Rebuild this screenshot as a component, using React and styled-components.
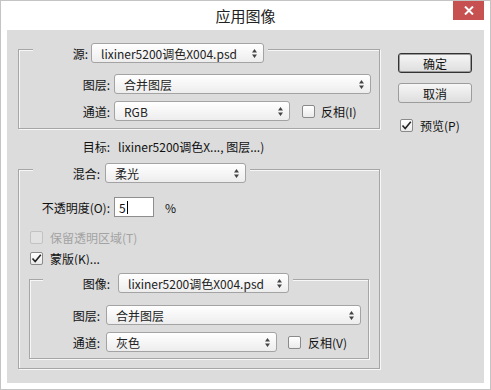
import React from 'react';
import styled, { createGlobalStyle } from 'styled-components';

const GlobalStyle = createGlobalStyle`
  html, body {
    margin: 0;
    padding: 0;
    background: #fff;
  }
  body {
    font-family: "Noto Sans CJK SC", "Noto Sans", sans-serif;
    font-size: 12px;
    color: #111;
  }
`;

const Window = styled.div`
  width: 491px;
  height: 390px;
  box-sizing: border-box;
  border: 1px solid #c4c4c4;
  background: #fff;
  display: flex;
  flex-direction: column;
`;

const TitleBar = styled.div`
  height: 29px;
  display: grid;
  grid-template-columns: 1fr auto 1fr;
  align-items: start;
`;

const Title = styled.div`
  grid-column: 2;
  font-size: 15px;
  line-height: 29px;
  color: #222;
`;

const CloseButton = styled.button`
  grid-column: 3;
  justify-self: end;
  margin: 0 6px 0 0;
  width: 31px;
  height: 19px;
  padding: 0;
  border: none;
  background: #c75050;
  display: flex;
  align-items: center;
  justify-content: center;
`;

const Body = styled.div`
  flex: 1;
  margin: 0 6px 6px;
  padding: 5px 0 0 11px;
  background: #dcdcdc;
  display: flex;
  gap: 18px;
`;

const LeftColumn = styled.div`
  width: 362px;
  display: flex;
  flex-direction: column;
`;

const RightColumn = styled.div`
  width: 74px;
  padding-top: 18px;
  display: flex;
  flex-direction: column;
  gap: 10px;
`;

const Group = styled.fieldset`
  margin: ${p => p.$margin || '0'};
  padding: ${p => p.$pt}px 0 ${p => p.$pb}px;
  border: 1px solid #a6a6a6;
  box-shadow: inset 1px 1px 0 #f7f7f7, 1px 1px 0 #f7f7f7;
  display: flex;
  flex-direction: column;
  min-width: 0;
`;

const Legend = styled.legend`
  margin-left: ${p => p.$ml}px;
  padding: 8px 4px 0;
  background: #dcdcdc;
  display: flex;
  align-items: center;
`;

const Row = styled.div`
  display: flex;
  align-items: center;
  height: ${p => p.$h || 20}px;
  margin-top: ${p => p.$mt || 0}px;
  padding-left: ${p => p.$pl || 0}px;
`;

const Label = styled.span`
  flex: none;
  width: ${p => p.$w}px;
  margin-right: ${p => p.$gap}px;
  text-align: right;
  white-space: nowrap;
`;

const Text = styled.span`
  white-space: nowrap;
  margin-left: ${p => p.$ml || 0}px;
  color: ${p => (p.$disabled ? '#a3a3a3' : 'inherit')};
`;

const SelectBox = styled.div`
  flex: none;
  box-sizing: border-box;
  width: ${p => p.$w}px;
  height: 20px;
  padding: 0 6px 0 9px;
  border: 1px solid #a3a3a3;
  border-radius: 3px;
  background: linear-gradient(#ffffff, #ededed);
  display: flex;
  align-items: center;
  justify-content: space-between;
  white-space: nowrap;
  color: #222;
`;

const TextInput = styled.div`
  flex: none;
  box-sizing: border-box;
  width: 40px;
  height: 20px;
  padding-left: 4px;
  border: 1px solid #8e8e8e;
  background: #fff;
  display: flex;
  align-items: center;
`;

const Caret = styled.span`
  display: inline-block;
  width: 1px;
  height: 13px;
  margin-left: 1px;
  background: #000;
`;

const Box = styled.span`
  flex: none;
  box-sizing: border-box;
  width: 13px;
  height: 13px;
  margin-left: ${p => p.$ml || 0}px;
  border: 1px solid ${p => (p.$disabled ? '#c2c2c2' : '#8a8a8a')};
  border-radius: 2px;
  background: ${p => (p.$disabled ? '#e2e2e2' : 'linear-gradient(#ffffff, #eaeaea)')};
  display: flex;
  align-items: center;
  justify-content: center;
`;

const Button = styled.button`
  box-sizing: border-box;
  width: 74px;
  height: 20px;
  padding: 0;
  font: inherit;
  font-size: 12px;
  color: #111;
  border: 1px solid ${p => (p.$primary ? '#333' : '#9c9c9c')};
  border-radius: 3px;
  box-shadow: ${p => (p.$primary ? 'inset 0 0 0 1px #9a9a9a' : 'none')};
  background: linear-gradient(#f6f6f6, #dedede);
  display: flex;
  align-items: center;
  justify-content: center;
`;

const Arrows = () => (
  <svg width="5" height="9" viewBox="0 0 5 9">
    <path d="M2.5 0 L5 3.5 L0 3.5 Z M2.5 9 L5 5.5 L0 5.5 Z" fill="#444" />
  </svg>
);

const Select = ({ w, children }) => (
  <SelectBox $w={w}>
    <span>{children}</span>
    <Arrows />
  </SelectBox>
);

const Checkbox = ({ checked, disabled, ml }) => (
  <Box $ml={ml} $disabled={disabled}>
    {checked && (
      <svg width="11" height="11" viewBox="0 0 11 11">
        <path d="M1.5 5.5 L4.2 8.5 L9.8 1.8" fill="none" stroke="#222" strokeWidth="1.6" />
      </svg>
    )}
  </Box>
);

export default function App() {
  return (
    <>
      <GlobalStyle />
      <Window>
        <TitleBar>
          <Title>应用图像</Title>
          <CloseButton aria-label="关闭">
            <svg width="10" height="9" viewBox="0 0 10 9">
              <path d="M1 0.5 L9 8.5 M9 0.5 L1 8.5" stroke="#fff" strokeWidth="2" />
            </svg>
          </CloseButton>
        </TitleBar>
        <Body>
          <LeftColumn>
            <Group $pt={11} $pb={7}>
              <Legend $ml={14}>
                <Label $w={51} $gap={3}>源:</Label>
                <Select w={173}>lixiner5200调色X004.psd</Select>
              </Legend>
              <Row>
                <Label $w={91} $gap={4}>图层:</Label>
                <Select w={257}>合并图层</Select>
              </Row>
              <Row $mt={7}>
                <Label $w={91} $gap={4}>通道:</Label>
                <Select w={176}>RGB</Select>
                <Checkbox ml={12} />
                <Text $ml={6}>反相(I)</Text>
              </Row>
            </Group>

            <Row $h={18} $mt={8}>
              <Label $w={92} $gap={8}>目标:</Label>
              <Text>lixiner5200调色X..., 图层...)</Text>
            </Row>

            <Group $pt={14} $pb={0}>
              <Legend $ml={14}>
                <Label $w={63} $gap={5}>混合:</Label>
                <Select w={141}>柔光</Select>
              </Legend>
              <Row>
                <Label $w={91} $gap={4}>不透明度(O):</Label>
                <TextInput>
                  5<Caret />
                </TextInput>
                <Text $ml={11}>%</Text>
              </Row>
              <Row $h={14} $mt={13} $pl={11}>
                <Checkbox disabled />
                <Text $ml={7} $disabled>保留透明区域(T)</Text>
              </Row>
              <Row $h={14} $mt={7} $pl={11}>
                <Checkbox checked />
                <Text $ml={7}>蒙版(K)...</Text>
              </Row>

              <Group $pt={12} $pb={6} $margin="0 10px 9px 10px">
                <Legend $ml={13}>
                  <Label $w={63} $gap={8}>图像:</Label>
                  <Select w={171}>lixiner5200调色X004.psd</Select>
                </Legend>
                <Row>
                  <Label $w={70} $gap={6}>图层:</Label>
                  <Select w={255}>合并图层</Select>
                </Row>
                <Row $mt={7}>
                  <Label $w={70} $gap={6}>通道:</Label>
                  <Select w={171}>灰色</Select>
                  <Checkbox ml={11} />
                  <Text $ml={7}>反相(V)</Text>
                </Row>
              </Group>
            </Group>
          </LeftColumn>

          <RightColumn>
            <Button $primary>确定</Button>
            <Button>取消</Button>
            <Row $h={14} $mt={5} $pl={2}>
              <Checkbox checked />
              <Text $ml={7}>预览(P)</Text>
            </Row>
          </RightColumn>
        </Body>
      </Window>
    </>
  );
}
